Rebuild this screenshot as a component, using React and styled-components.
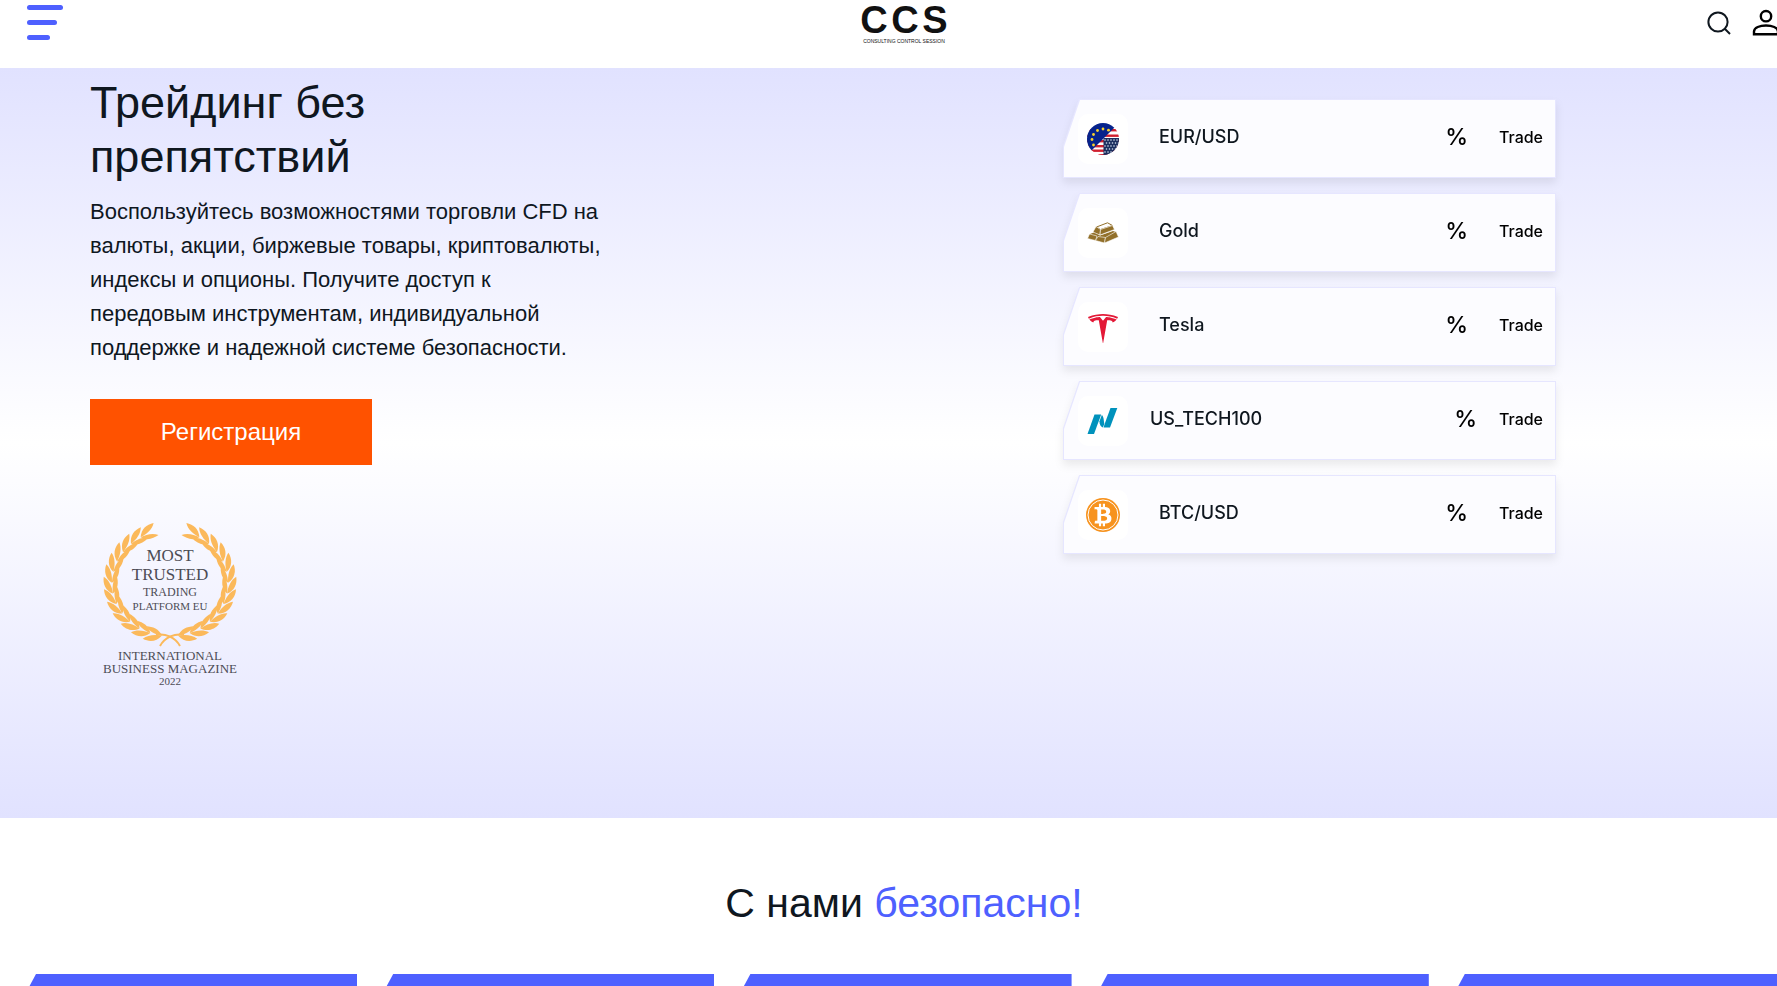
import React from 'react'
import styled, { createGlobalStyle } from 'styled-components'
import { FaBtc } from 'react-icons/fa'
import { SiTesla } from 'react-icons/si'

const GlobalStyle = createGlobalStyle`
    * {
        box-sizing: border-box;
    }

    body {
        margin: 0;
        overflow-x: hidden;
        background-color: white;
        color: #0f171f;
        font-family: "Liberation Sans", Arial, sans-serif;
    }
`

const Page = styled.div`
    width: calc(100% + 31px);
`

const Header = styled.header`
    display: grid;
    grid-template-columns: 1fr auto 1fr;
    height: 68px;
    padding: 5px 28px 0 27px;
    background-color: white;
`

const MenuButton = styled.button`
    display: flex;
    flex-direction: column;
    align-self: start;
    justify-self: start;
    gap: 10px;
    padding: 0;
    border: none;
    background: none;
    cursor: pointer;
`

const MenuBar = styled.span`
    width: ${({ $width }) => $width}px;
    height: 5px;
    border-radius: 3px;
    background-color: #4e60ff;
`

const Logo = styled.a`
    align-self: start;

    svg {
        display: block;
        overflow: visible;
    }
`

const HeaderActions = styled.nav`
    display: flex;
    align-self: start;
    justify-self: end;
    gap: 20px;
    padding-top: 4px;
`

const IconLink = styled.a`
    display: flex;
    color: ${({ $color }) => $color};
`

const Hero = styled.section`
    display: flex;
    justify-content: space-between;
    align-items: flex-start;
    min-height: 750px;
    padding: 8px 252px 0 90px;
    background-image: linear-gradient(180deg, #e1e2ff 0%, #ffffff 50%, #e1e2ff 100%);
`

const HeroText = styled.div`
    display: flex;
    flex-direction: column;
    align-items: flex-start;
    width: 518px;
`

const HeroTitle = styled.h1`
    width: 320px;
    margin: 0;
    font-size: 45px;
    line-height: 54px;
    font-weight: 400;
`

const Desc = styled.p`
    margin: 11px 0 34px;
    font-size: 22px;
    line-height: 34px;
`

const RegisterButton = styled.button`
    width: 282px;
    height: 66px;
    border: none;
    background-color: #ff5200;
    color: white;
    font-family: inherit;
    font-size: 24px;
    cursor: pointer;
`

const Award = styled.svg`
    margin-top: 49px;
`

const Quotes = styled.ul`
    display: flex;
    flex-direction: column;
    gap: 15px;
    width: 493px;
    margin: 23px 0 0;
    padding: 0;
    list-style: none;
    font-family: Inter, sans-serif;
    font-weight: 500;
`

const QuoteShadow = styled.li`
    filter: drop-shadow(0 5px 4px rgba(0, 0, 0, 0.08));
`

const QuoteBorder = styled.div`
    padding: 1px;
    background-color: #e6e6ff;
    clip-path: polygon(16px 0, 100% 0, 100% 100%, 0 100%, 0 47px);
`

const Quote = styled.div`
    display: flex;
    align-items: center;
    height: 77px;
    padding: 0 12px 0 14px;
    background-color: #fcfcff;
    clip-path: polygon(16px 0, 100% 0, 100% 100%, 0 100%, 0 47px);
`

const QuoteIcon = styled.span`
    display: flex;
    justify-content: center;
    align-items: center;
    width: 50px;
    height: 50px;
    border-radius: 10px;
    background-color: white;
`

const QuoteBody = styled.div`
    display: flex;
    flex: 1;
    justify-content: space-between;
    align-items: center;
    padding: 0 ${({ $wide }) => ($wide ? 22 : 31)}px 4px;
`

const QuoteName = styled.span`
    font-size: 18px;
`

const QuoteChange = styled.span`
    font-size: 23px;
    color: black;
`

const TradeLink = styled.a`
    padding-bottom: 4px;
    font-size: 16px;
    color: black;
    text-decoration: none;
`

const Safety = styled.section`
    padding-top: 60px;
`

const SafetyTitle = styled.h2`
    margin: 0 0 46px;
    font-size: 41px;
    line-height: 50px;
    font-weight: 400;
    text-align: center;
`

const Accent = styled.span`
    color: #4e60ff;
`

const SafetyCards = styled.div`
    display: grid;
    grid-template-columns: repeat(5, 1fr);
    gap: 29px;
    padding: 0 22px 0 29px;
`

const SafetyCard = styled.article`
    height: 320px;
    background-color: #4e60ff;
    clip-path: polygon(7px 0, 100% 0, 100% 100%, 0 100%, 0 13px);
`

const EurUsdIcon = () => (
    <svg width="32" height="32" viewBox="0 0 32 32">
        <defs>
            <clipPath id="coin">
                <circle cx="16" cy="16" r="16" />
            </clipPath>
        </defs>
        <g clipPath="url(#coin)">
            <rect width="32" height="32" fill="#fff" />
            {[6, 11.5, 17, 22, 26.5, 31].map((y) => (
                <rect key={y} y={y} width="32" height="2.4" fill="#d0202f" />
            ))}
            <rect x="16.5" y="15" width="16" height="17" fill="#1c2f5f" />
            {[17, 20, 23, 26, 29].map((y, row) =>
                [18, 21, 24, 27, 30].map((x) => (
                    <circle key={`${x}-${y}`} cx={x + (row % 2 ? 1.5 : 0)} cy={y} r="0.8" fill="#dbe3f2" />
                ))
            )}
            <path d="M0 0H32L4 28H0Z" fill="#06238b" />
            {[[6.5, 22], [5, 16.5], [6.5, 11.5], [10.5, 7.5], [16, 6], [21.5, 7.2]].map(([x, y]) => (
                <circle key={x + y * 100} cx={x} cy={y} r="1.4" fill="#f8d12c" />
            ))}
        </g>
    </svg>
)

const GoldIcon = () => (
    <svg width="32" height="32" viewBox="0 0 32 32" fill="#92702a" stroke="#fff" strokeWidth="0.6" strokeLinejoin="round">
        <path d="M3 17 8 15 13 18.5 26 14 29 15 30 18 17 25 3 22Z" stroke="none" />
        <path d="M9.5 10 20.5 5.8 25.5 8.5 13.5 12.5Z" fill="#fff" stroke="#92702a" strokeWidth="1" />
        <path d="M9 9.5 13.5 12.5 13 18 6 15Z" />
        <path d="M13.5 12.5 25.5 8.5 27.5 12.5 13 18Z" />
        <path d="M2.5 17 10 19 8.5 23.5 0.5 21.5Z" />
        <path d="M11 19.5 18.5 20.5 17.5 26 8.5 23.5Z" />
        <path d="M18.5 20.5 29 14.5 31.5 20 17.5 26Z" />
    </svg>
)

const TeslaIcon = () => (
    <svg width="32" height="32" viewBox="0 0 32 32">
        <SiTesla x="1" y="3" size={30} color="#e31937" />
    </svg>
)

const NasdaqIcon = () => (
    <svg width="32" height="32" viewBox="0 0 32 32" fill="#0092bc">
        <path d="M7.5 9.5H14.2L12 15.5L7 29H0.5Z" />
        <path d="M14.8 10C16 11 16.4 12.5 16.7 14.5L17.3 19L15.8 22.5C14 21.8 13.2 20.5 12.7 18.5L12.4 16.5Z" />
        <path d="M23.5 3H30.3L23 22.5H16.5L18 18Z" />
    </svg>
)

const BtcIcon = () => (
    <svg width="34" height="34" viewBox="0 0 34 34">
        <circle cx="17" cy="17" r="17" fill="#f7931e" />
        <circle cx="17" cy="17" r="15" fill="none" stroke="#fff" strokeWidth="1" />
        <FaBtc x="5.5" y="5.5" size={23} color="#fff" />
    </svg>
)

const quotes = [
    { name: 'EUR/USD', icon: <EurUsdIcon /> },
    { name: 'Gold', icon: <GoldIcon /> },
    { name: 'Tesla', icon: <TeslaIcon /> },
    { name: 'US_TECH100', icon: <NasdaqIcon />, wide: true },
    { name: 'BTC/USD', icon: <BtcIcon /> },
]

// one half of the wreath, leaves run from the bottom knot up to the tip
const leafAngles = Array.from({ length: 13 }, (_, i) => 102 + i * 11.8)

const LaurelBranch = () => (
    <g fill="#fbb95b">
        {leafAngles.map((angle) => {
            const rad = (angle * Math.PI) / 180
            const x = 80 + 58 * Math.cos(rad)
            const y = 69 + 53 * Math.sin(rad)
            return (
                <g key={angle} transform={`translate(${x} ${y}) rotate(${angle + 90})`}>
                    <path d="M-4 0C0 -7 7 -9 14 -7C10 -2 3 0 -4 0Z" />
                    <path d="M-4 0C2 0 9 1 13 6C7 7 0 6 -4 0Z" />
                </g>
            )
        })}
        <path d="M66 121C75 119 85 123 90 132" fill="none" stroke="#fbb95b" strokeWidth="2" />
    </g>
)

const awardLines = [
    { text: 'MOST', y: 47, size: 17 },
    { text: 'TRUSTED', y: 66, size: 17 },
    { text: 'TRADING', y: 82, size: 12 },
    { text: 'PLATFORM EU', y: 96, size: 11 },
    { text: 'INTERNATIONAL', y: 146, size: 13 },
    { text: 'BUSINESS MAGAZINE', y: 159, size: 13 },
    { text: '2022', y: 171, size: 11 },
]

const App = () => {
    return (
        <Page>
            <GlobalStyle />

            <Header>
                <MenuButton type="button" aria-label="Меню">
                    <MenuBar $width={36} />
                    <MenuBar $width={30} />
                    <MenuBar $width={23} />
                </MenuButton>

                <Logo href="#" aria-label="CCS">
                    <svg width="88" height="40" viewBox="0 0 88 40" fill="#111" fontFamily="Liberation Sans, Arial, sans-serif">
                        <g fontSize="38" fontWeight="700" textAnchor="middle">
                            <text x="14" y="28">C</text>
                            <text x="45" y="28">C</text>
                            <text x="75" y="28">S</text>
                        </g>
                        <text x="44" y="38" fontSize="5" textAnchor="middle">CONSULTING CONTROL SESSION</text>
                    </svg>
                </Logo>

                <HeaderActions>
                    <IconLink href="#" aria-label="Поиск" $color="#0f171f">
                        <svg width="26" height="28" viewBox="0 0 26 28" fill="none" stroke="currentColor" strokeWidth="2">
                            <circle cx="12" cy="13" r="9.6" />
                            <path d="M18.5 19.5L24 25" />
                        </svg>
                    </IconLink>
                    <IconLink href="#" aria-label="Личный кабинет" $color="#000">
                        <svg width="28" height="28" viewBox="0 0 28 28" fill="none" stroke="currentColor" strokeWidth="2.4">
                            <circle cx="14" cy="7.2" r="5.2" />
                            <path d="M2 25.2V22.5C2 14.5 26 14.5 26 22.5V25.2Z" />
                        </svg>
                    </IconLink>
                </HeaderActions>
            </Header>

            <Hero>
                <HeroText>
                    <HeroTitle>Трейдинг без препятствий</HeroTitle>
                    <Desc>
                        Воспользуйтесь возможностями торговли CFD на валюты, акции, биржевые товары,
                        криптовалюты, индексы и опционы. Получите доступ к передовым инструментам,
                        индивидуальной поддержке и надежной системе безопасности.
                    </Desc>
                    <RegisterButton type="button">Регистрация</RegisterButton>
                    <Award width="160" height="180" viewBox="0 0 160 180">
                        <LaurelBranch />
                        <g transform="translate(160 0) scale(-1 1)">
                            <LaurelBranch />
                        </g>
                        <g fill="#4c4c55" fontFamily="Liberation Serif, serif" textAnchor="middle">
                            {awardLines.map(({ text, y, size }) => (
                                <text key={text} x="80" y={y} fontSize={size}>{text}</text>
                            ))}
                        </g>
                    </Award>
                </HeroText>

                <Quotes>
                    {quotes.map(({ name, icon, wide }) => (
                        <QuoteShadow key={name}>
                            <QuoteBorder>
                                <Quote>
                                    <QuoteIcon>{icon}</QuoteIcon>
                                    <QuoteBody $wide={wide}>
                                        <QuoteName>{name}</QuoteName>
                                        <QuoteChange>%</QuoteChange>
                                    </QuoteBody>
                                    <TradeLink href="#">Trade</TradeLink>
                                </Quote>
                            </QuoteBorder>
                        </QuoteShadow>
                    ))}
                </Quotes>
            </Hero>

            <Safety>
                <SafetyTitle>
                    С нами <Accent>безопасно!</Accent>
                </SafetyTitle>
                <SafetyCards>
                    <SafetyCard />
                    <SafetyCard />
                    <SafetyCard />
                    <SafetyCard />
                    <SafetyCard />
                </SafetyCards>
            </Safety>
        </Page>
    )
}

export default App
